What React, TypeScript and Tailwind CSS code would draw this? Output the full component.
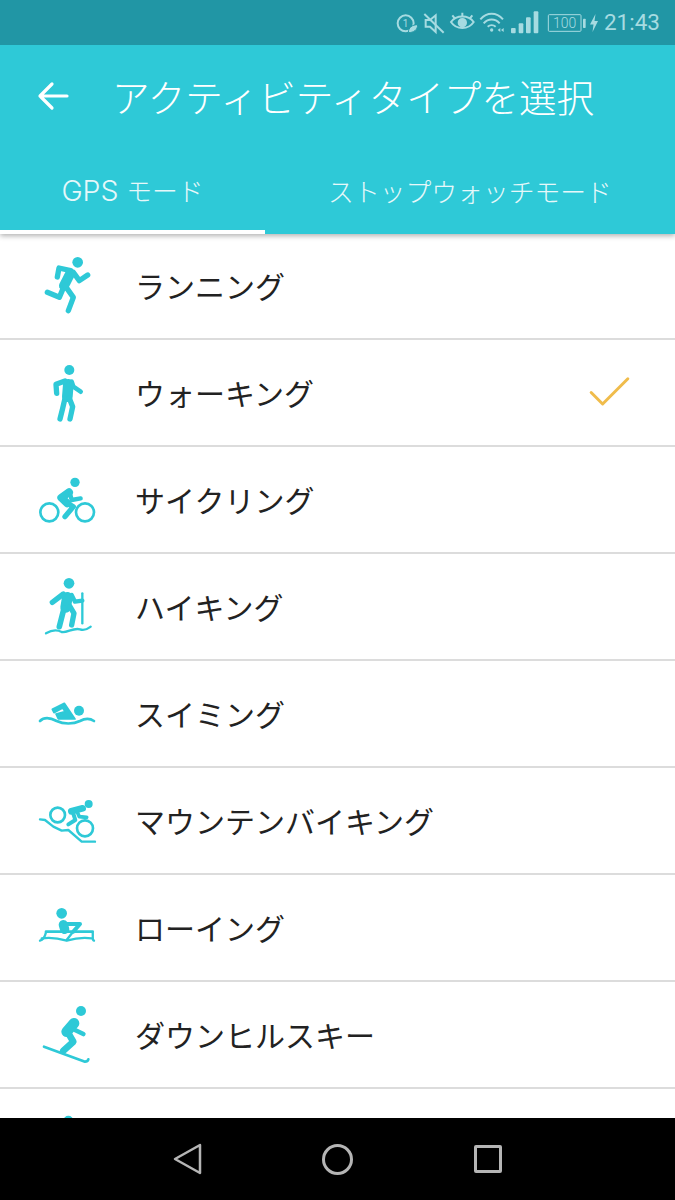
import React from 'react';
import { Check } from 'lucide-react';

const TEAL = '#2ec9d7';

const Limb = ({ d, w = 16 }: { d: string; w?: number }) => (
  <path d={d} fill="none" stroke={TEAL} strokeWidth={w} strokeLinecap="round" strokeLinejoin="round" />
);
const Head = ({ x, y, r }: { x: number; y: number; r: number }) => <circle cx={x} cy={y} r={r} fill={TEAL} />;

const icons: { box: string; art: React.ReactNode }[] = [
  {
    box: '0 -24 300 300',
    art: (
      <>
        <Head x={173} y={55} r={16} />
        <Limb d="M150 90 L132 125" w={30} />
        <Limb d="M152 80 L117 72 L112 99" />
        <Limb d="M160 85 L178 110 L203 93" />
        <Limb d="M133 125 L118 160 L82 145" />
        <Limb d="M135 125 L160 160 L145 200" />
      </>
    ),
  },
  {
    box: '0 294 300 300',
    art: (
      <>
        <Head x={148} y={375} r={15} />
        <Limb d="M145 418 L142 455" w={32} />
        <Limb d="M135 408 L108 418 L110 445" />
        <Limb d="M155 410 L160 425 L182 440" w={14} />
        <Limb d="M135 460 L128 490 L120 522" />
        <Limb d="M148 460 L158 485 L150 522" />
      </>
    ),
  },
  {
    box: '0 615 300 300',
    art: (
      <>
        <Head x={165} y={712} r={14} />
        <circle cx={88} cy={802} r={27} fill="none" stroke={TEAL} strokeWidth={8} />
        <circle cx={195} cy={802} r={27} fill="none" stroke={TEAL} strokeWidth={8} />
        <Limb d="M147 742 L124 758 L142 775" w={24} />
        <Limb d="M135 770 L160 785 L135 815" w={16} />
        <Limb d="M150 745 L155 765 L182 760" w={13} />
      </>
    ),
  },
  {
    box: '0 -39 300 300',
    art: (
      <>
        <Head x={147} y={40} r={16} />
        <Limb d="M142 82 L137 112" w={32} />
        <Limb d="M130 72 L97 97" />
        <Limb d="M155 75 L165 95 L187 92" w={13} />
        <Limb d="M187 70 L187 160" w={7} />
        <Limb d="M132 115 L118 170" w={17} />
        <Limb d="M150 110 L162 130 L155 165" w={16} />
        <Limb d="M78 190 C95 180 110 178 125 186 C140 190 160 172 180 178 C195 184 205 175 212 170" w={7} />
      </>
    ),
  },
  {
    box: '0 282 300 300',
    art: (
      <>
        <Head x={177} y={422} r={15} />
        <path d="M97 418 L133 400 L165 447 L115 447 L108 432 L135 425 L128 414 L102 428 Z" fill={TEAL} stroke={TEAL} strokeWidth={5} strokeLinejoin="round" />
        <Limb d="M60 453 C75 438 95 445 110 453 C130 463 160 463 180 453 C195 445 210 445 222 453" w={8} />
      </>
    ),
  },
  {
    box: '0 603 300 300',
    art: (
      <>
        <Head x={206} y={702} r={12} />
        <circle cx={113} cy={735} r={22} fill="none" stroke={TEAL} strokeWidth={8} />
        <circle cx={195} cy={775} r={24} fill="none" stroke={TEAL} strokeWidth={8} />
        <Limb d="M154 724 L188 715" w={20} />
        <Limb d="M170 722 L178 740 L200 742" w={11} />
        <Limb d="M158 725 L166 750 L145 763" w={12} />
        <Limb d="M60 748 L75 750 L100 770 L125 782 L145 780 L185 815 L225 815" w={7} />
      </>
    ),
  },
  {
    box: '0 -36 300 300',
    art: (
      <>
        <Head x={125} y={70} r={16} />
        <Limb d="M130 104 L134 118" w={28} />
        <Limb d="M135 102 L180 102 L160 125" w={12} />
        <Limb d="M165 118 L140 150" w={7} />
        <Limb d="M78 125 L218 125" w={8} />
        <Limb d="M60 152 C70 150 75 140 78 127" w={7} />
        <Limb d="M218 127 C220 140 215 150 222 152" w={7} />
        <Limb d="M65 145 Q100 140 140 152 Q180 140 215 145" w={7} />
      </>
    ),
  },
  {
    box: '0 285 300 300',
    art: (
      <>
        <Head x={183} y={363} r={15} />
        <Limb d="M162 400 L140 425" w={32} />
        <Limb d="M145 430 L160 455 L130 482" w={20} />
        <Limb d="M165 420 L190 432" w={14} />
        <Limb d="M72 470 L195 515 Q203 515 205 508" w={8} />
      </>
    ),
  },
  {
    box: '0 606 300 300',
    art: <Head x={145} y={692} r={15} />,
  },
];

// last row only shows the top of its icon above the nav bar
const ROWS = ['ランニング', 'ウォーキング', 'サイクリング', 'ハイキング', 'スイミング', 'マウンテンバイキング', 'ローイング', 'ダウンヒルスキー', ''];

const StatusIcons = () => (
  <svg width="193" height="26" viewBox="60 30 579 78" fill="none" stroke="#a6dbe1" strokeWidth="6">
    <circle cx="92" cy="70" r="24" />
    <text x="92" y="82" textAnchor="middle" fontSize="30" fontFamily="Roboto, sans-serif" fill="#a6dbe1" stroke="none">1</text>
    <path d="M100 98 C100 82 112 74 128 74 C128 90 116 98 100 98 Z" fill="#a6dbe1" stroke="#2196a5" strokeWidth="3" />
    <path d="M152 60 L165 60 L182 46 L182 96 L165 80 L152 80 Z" />
    <path d="M148 42 L206 98" />
    <path d="M228 66 C244 44 280 44 296 66 C280 90 244 90 228 66 Z" />
    <circle cx="262" cy="68" r="11" fill="#a6dbe1" />
    <path d="M232 46 L240 56 M262 38 L262 50 M292 46 L284 56" />
    <path d="M316 58 C336 36 364 36 384 58 M326 70 C340 55 360 55 374 70 M338 80 C345 74 355 74 362 80" />
    <circle cx="350" cy="90" r="5" fill="#a6dbe1" stroke="none" />
    <path d="M368 90 L376 84 L376 96 Z M386 84 L386 96 L378 90 Z" fill="#a6dbe1" stroke="none" />
    <rect x="408" y="84" width="14" height="16" rx="3" fill="#a6dbe1" stroke="none" />
    <rect x="431" y="70" width="14" height="30" rx="3" fill="#a6dbe1" stroke="none" />
    <rect x="453" y="52" width="14" height="48" rx="3" fill="#a6dbe1" stroke="none" />
    <rect x="476" y="34" width="14" height="66" rx="3" fill="#a6dbe1" stroke="none" />
    <rect x="520" y="44" width="98" height="50" rx="3" strokeWidth="3" />
    <text x="569" y="85" textAnchor="middle" fontSize="42" fontFamily="Roboto, sans-serif" fontWeight="300" fill="#a6dbe1" stroke="none">100</text>
    <rect x="624" y="56" width="8" height="28" rx="2" fill="#a6dbe1" stroke="none" />
  </svg>
);

export default function App() {
  return (
    <div className="h-[1200px] w-[675px] flex flex-col overflow-hidden bg-white font-['Noto_Sans_CJK_JP',sans-serif]">
      <div className="relative z-10 shadow-[0_2px_5px_rgba(0,0,0,0.3)] bg-[#2ec9d7] text-white">
        <div className="h-[45px] bg-[#2196a5] flex items-center justify-end pr-[15px]">
          <StatusIcons />
          <svg width="10" height="22" viewBox="0 0 10 22" className="ml-[1px] mr-[5px]">
            <path d="M6.5 2 L1 12.5 L4.5 12.5 L3.5 20 L9 9 L5.5 9 Z" fill="#a6dbe1" />
          </svg>
          <span className="font-['Roboto',sans-serif] text-[22.5px] text-[#a6dbe1]">21:43</span>
        </div>
        <div className="h-[105px] flex items-center pl-[37px] pb-[3px]">
          <svg width="32" height="30" viewBox="0 0 32 30" fill="none" stroke="white" strokeWidth="3.2" strokeLinecap="round" strokeLinejoin="round" className="shrink-0">
            <path d="M30 15 L3 15 M15 3 L3 15 L15 27" />
          </svg>
          <span className="ml-[43px] text-[37.6px] font-light leading-none whitespace-nowrap">アクティビティタイプを選択</span>
        </div>
        <div className="h-[84px] flex text-[25.8px] font-light text-[#e6f8fa]">
          <div className="w-[265px] flex items-center justify-center border-b-[4px] border-white pt-[3px]">
            <span className="whitespace-nowrap"><span className="font-['Inter',sans-serif] text-[28.5px] mr-[2px]">GPS</span> モード</span>
          </div>
          <div className="flex-1 flex items-center justify-center pb-[1px] whitespace-nowrap">ストップウォッチモード</div>
        </div>
      </div>

      <div className="flex-1 overflow-hidden">
        {ROWS.map((label, i) => (
          <div key={i} className={`flex items-center border-b-2 border-[#dcdcdc] pl-[20px] pr-[38px] ${i === 0 ? 'h-[106px]' : 'h-[107px]'}`}>
            <svg width="100" height="100" viewBox={icons[i].box} className="shrink-0">
              {icons[i].art}
            </svg>
            <span className="ml-[15px] flex-1 text-[30px] leading-none text-[#222222] whitespace-nowrap pb-[2px]">{label}</span>
            {i === 1 && <Check size={55} strokeWidth={1.3} color="#f0bc4b" className="shrink-0" />}
          </div>
        ))}
      </div>

      <div className="h-[82px] shrink-0 bg-black flex items-center justify-center">
        <div className="w-[150px] flex justify-center">
          <svg width="30" height="32" viewBox="0 0 30 32">
            <path d="M27 2 L2 16 L27 30 Z" fill="none" stroke="#b5b5b5" strokeWidth="2.5" strokeLinejoin="round" />
          </svg>
        </div>
        <div className="w-[150px] flex justify-center">
          <div className="w-[31px] h-[31px] rounded-full border-[3px] border-[#b5b5b5]" />
        </div>
        <div className="w-[150px] flex justify-center">
          <div className="w-[28px] h-[28px] rounded-[2px] border-[3px] border-[#b5b5b5]" />
        </div>
      </div>
    </div>
  );
}
